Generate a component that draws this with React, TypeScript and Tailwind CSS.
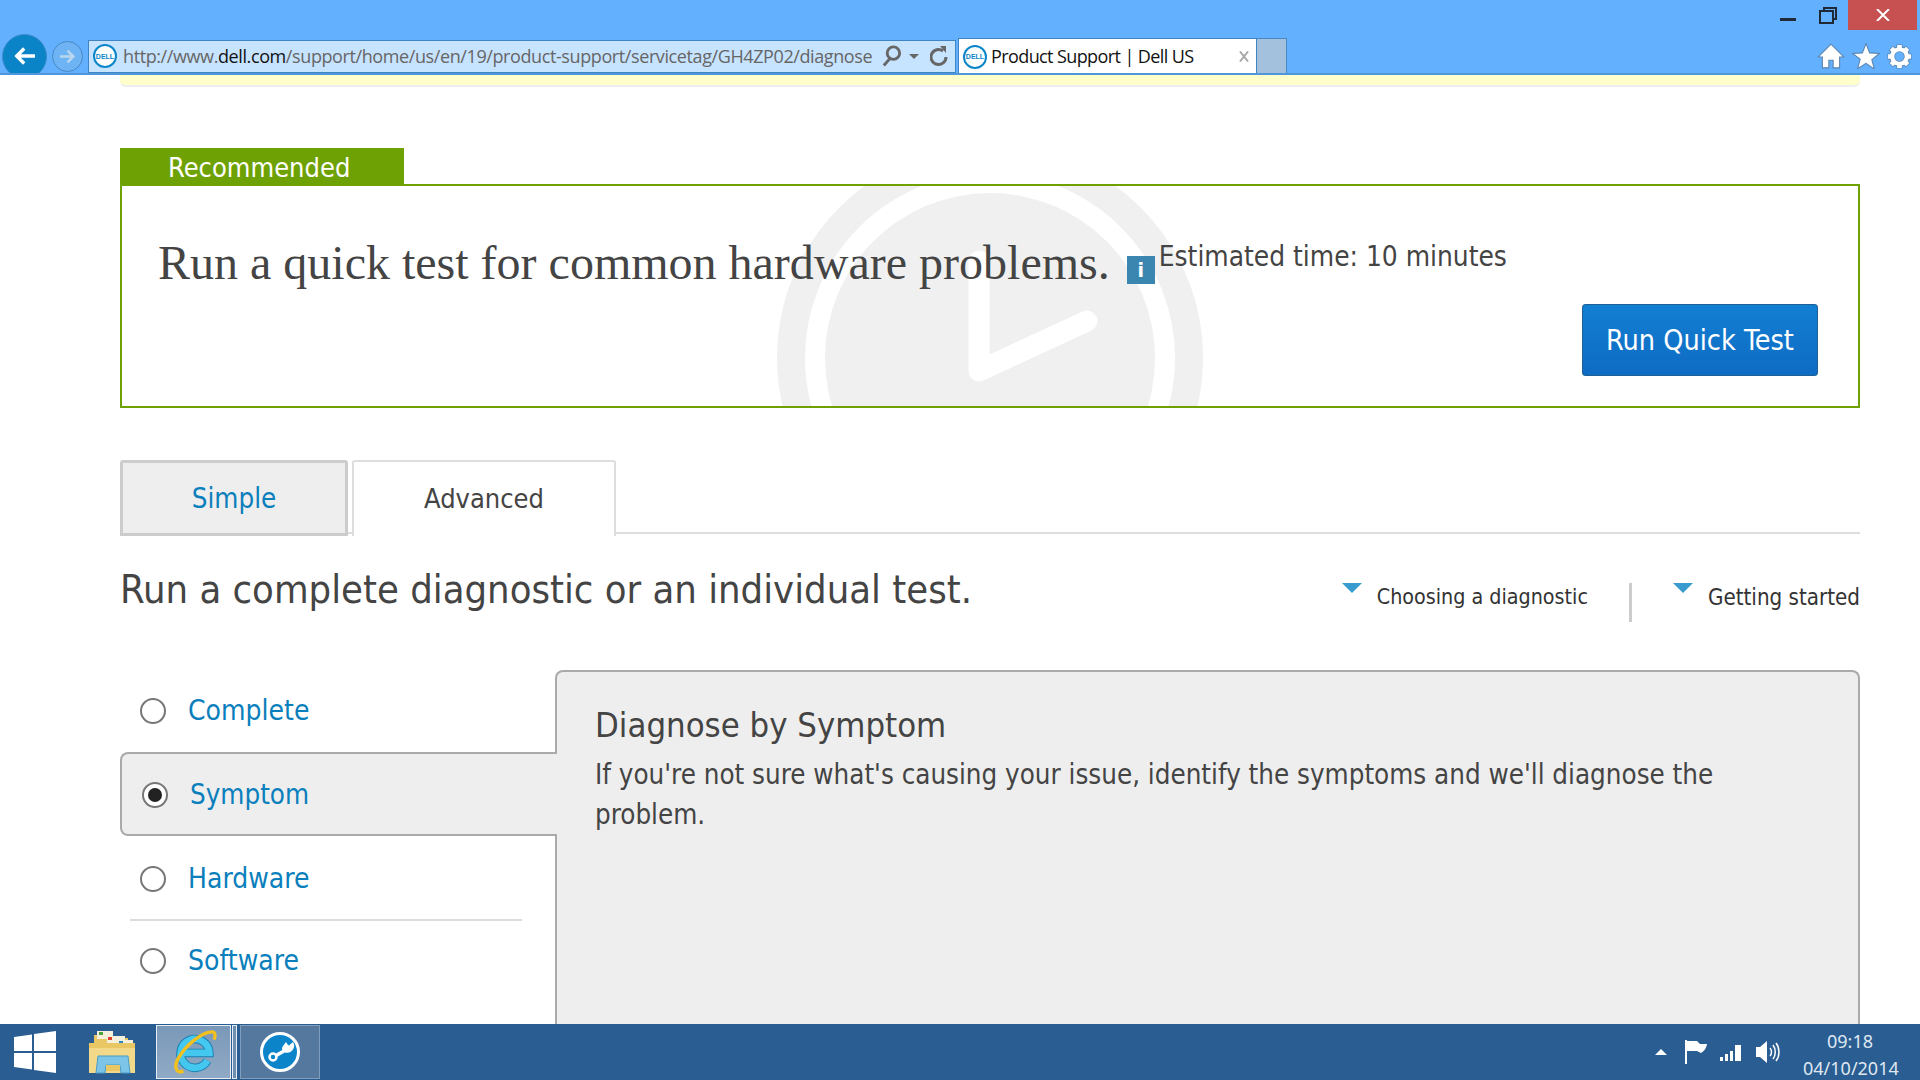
const bodyFont = "font-['DejaVu_Sans_Condensed','DejaVu_Sans',sans-serif]";

function DellLogo() {
  return (
    <div className="flex h-6 w-6 shrink-0 items-center justify-center rounded-full border-2 border-[#0a86c9] bg-white">
      <span className="font-['Liberation_Sans',sans-serif] text-[7px] leading-none font-bold text-[#0a86c9]">DELL</span>
    </div>
  );
}

function BrowserChrome() {
  return (
    <header className="h-[75px] shrink-0 overflow-hidden border-b-2 border-[#4e97dc] bg-[#62b0fe]">
      {/* Window controls */}
      <div className="flex h-[38px] justify-end">
        <div className="mt-[18px] mr-[23px] h-[3px] w-[16px] bg-[#1f2a36]" />
        <svg viewBox="0 0 18 17" className="mt-[7px] mr-[11px] h-[17px] w-[18px]" fill="none" stroke="#1f2a36" strokeWidth="2">
          <path d="M5 3V1h12v11h-3" />
          <rect x="1" y="4" width="13" height="12" />
        </svg>
        <div className="mr-[3px] flex h-[30px] w-[69px] items-center justify-center bg-[#c75050]">
          <svg viewBox="0 0 14 12" className="h-[12px] w-[14px]" stroke="#fff" strokeWidth="2">
            <path d="M1 0l12 12M13 0L1 12" />
          </svg>
        </div>
      </div>

      {/* Navigation row */}
      <div className="flex h-[36px] items-center">
        <div className="ml-[2px] flex h-[45px] w-[45px] shrink-0 items-center justify-center rounded-full border border-[#3c8ccb] bg-[#0a84c6]">
          <svg viewBox="0 0 26 24" className="h-[20px] w-[24px]" fill="none" stroke="#fff" strokeWidth="4">
            <path d="M12 3L3 12l9 9M3 12h22" />
          </svg>
        </div>
        <div className="ml-[5px] flex h-[31px] w-[31px] shrink-0 items-center justify-center rounded-full border border-[#4a88c4] bg-[#6eb4f5]">
          <svg viewBox="0 0 20 18" className="h-[15px] w-[17px]" fill="none" stroke="#b9d6ef" strokeWidth="3">
            <path d="M10 2l7 7-7 7M17 9H1" />
          </svg>
        </div>
        <div className="ml-[5px] flex h-[33px] w-[868px] shrink-0 items-center border border-[#3f85c4] bg-[#c6e3ff] pl-[4px]">
          <DellLogo />
          <span className="ml-[6px] w-[750px] shrink-0 font-['Open_Sans',sans-serif] text-[18px] tracking-[-0.4px] whitespace-nowrap text-[#666]">
            http://www.<span className="text-[#111]">dell.com</span>/support/home/us/en/19/product-support/servicetag/GH4ZP02/diagnose
          </span>
          <svg viewBox="0 0 22 24" className="ml-[8px] h-[24px] w-[21px]" fill="none" stroke="#666" strokeWidth="3">
            <circle cx="13" cy="9" r="6.5" />
            <path d="M9 15l-6 7" />
          </svg>
          <div className="ml-[7px] h-0 w-0 border-x-[5px] border-t-[5px] border-x-transparent border-t-[#666]" />
          <svg viewBox="0 0 18 22" className="ml-[11px] h-[22px] w-[18px]" fill="none" stroke="#666" strokeWidth="3">
            <path d="M13 6a7.5 7.5 0 1 0 3 6" />
            <path d="M10 1l6 0 0 7z" fill="#666" stroke="none" />
          </svg>
        </div>
        <div className="ml-[2px] flex h-[36px] w-[299px] shrink-0 items-center border border-b-0 border-[#3f85c4] bg-white pl-[4px]">
          <DellLogo />
          <span className="ml-[4px] font-['Open_Sans',sans-serif] text-[18px] tracking-[-0.6px] whitespace-nowrap text-[#111]">Product Support | Dell US</span>
          <svg viewBox="0 0 10 10" className="mr-[7px] ml-auto h-[11px] w-[10px]" stroke="#aaa" strokeWidth="2">
            <path d="M1 0l8 10M9 0L1 10" />
          </svg>
        </div>
        <div className="h-[36px] w-[30px] shrink-0 border border-l-0 border-[#4a88c4] bg-[#a3c1dd]" />
        <div className="ml-auto flex items-center gap-[7px] pr-[8px]">
          <svg viewBox="0 0 26 24" className="h-[26px] w-[28px]" fill="#fff" stroke="#5b84ad" strokeWidth="1">
            <path d="M13 1L1 13h4v10h6v-7h4v7h6V13h4z" />
          </svg>
          <svg viewBox="0 0 26 24" className="h-[26px] w-[28px]" fill="#fff" stroke="#5b84ad" strokeWidth="1">
            <path d="M13 0.5l3.4 8.6 9.1.5-7.1 5.8 2.4 8.8L13 18.8l-7.8 4.9 2.4-8.8L.5 9.6l9.1-.5z" />
          </svg>
          <svg viewBox="0 0 24 24" className="h-[25px] w-[25px]" fill="none">
            <path d="M12 .5v5M12 18.500v5M.5 12h5M18.500 12h5M3.800 3.800l3.600 3.600M16.600 16.600l3.600 3.600M20.200 3.800l-3.600 3.600M7.400 16.600l-3.600 3.600" stroke="#5b84ad" strokeWidth="6" />
            <circle cx="12" cy="12" r="7" stroke="#5b84ad" strokeWidth="5.500" />
            <path d="M12 1v4M12 19v4M1 12h4M19 12h4M4.200 4.200l3 3M16.800 16.800l3 3M19.800 4.200l-3 3M7.200 16.800l-3 3" stroke="#fff" strokeWidth="4.500" />
            <circle cx="12" cy="12" r="7" stroke="#fff" strokeWidth="4" />
          </svg>
        </div>
      </div>
    </header>
  );
}

function QuickTestCard() {
  return (
    <section className="mt-[61px]">
      <div className="flex h-[36px] w-[284px] items-center bg-[#6ea204] pt-[4px] pl-[48px] text-[27px] text-white">Recommended</div>
      <div className="relative h-[224px] overflow-hidden border-2 border-[#6ea204] bg-white">
        <svg viewBox="0 0 1736 220" className="absolute inset-0 h-[220px] w-[1736px]" fill="none">
          <circle cx="868" cy="172" r="199" stroke="#f0f0f0" strokeWidth="28" />
          <circle cx="868" cy="172" r="165" fill="#f0f0f0" />
          <path d="M857 75v110l108-50" stroke="#fff" strokeWidth="21" strokeLinecap="round" strokeLinejoin="round" />
        </svg>
        <div className="relative flex items-start pt-[49px] pl-[36px]">
          <h2 className="font-['Liberation_Serif',serif] text-[48px] leading-[56px] text-[#444]">Run a quick test for common hardware problems.</h2>
          <div className="mt-[21px] ml-[17px] flex h-[28px] w-[28px] items-center justify-center bg-[#3b86b0] font-['DejaVu_Sans',sans-serif] text-[19px] leading-none font-bold text-white">i</div>
          <span className="mt-[5px] ml-[4px] text-[27.8px] leading-[34px] text-[#444]">Estimated time: 10 minutes</span>
        </div>
        <div className="relative mt-[13px] flex justify-end pr-[40px]">
          <button className="h-[72px] w-[236px] rounded-[3px] border border-[#1f6096] bg-gradient-to-b from-[#127fd2] to-[#0f6bc4] pt-[2px] text-[28.5px] text-white">Run Quick Test</button>
        </div>
      </div>
    </section>
  );
}

function Tabs() {
  return (
    <nav className="mt-[52px] flex h-[74px] gap-[4px] border-b-2 border-[#dddddd]">
      <div className="flex h-[76px] w-[228px] items-center justify-center rounded-t-[3px] border-[3px] border-[#cccccc] bg-[#eeeeee] pt-[1px] text-[27.5px] text-[#0a7fbc]">Simple</div>
      <div className="flex h-[76px] w-[264px] items-center justify-center rounded-t-[3px] border-2 border-b-0 border-[#dddddd] bg-white text-[27px] text-[#444]">Advanced</div>
    </nav>
  );
}

function HelpLink({ label, className }: { label: string; className: string }) {
  return (
    <div className="flex items-start gap-[15px]">
      <div className="h-0 w-0 border-x-[10px] border-t-[10px] border-x-transparent border-t-[#3a9bd0]" />
      <span className={`mt-px leading-[26px] whitespace-nowrap text-[#333] ${className}`}>{label}</span>
    </div>
  );
}

function Radio({ checked }: { checked?: boolean }) {
  return (
    <div className="flex h-[26px] w-[26px] shrink-0 items-center justify-center rounded-full border-2 border-[#777] bg-white">
      {checked && <div className="h-[14px] w-[14px] rounded-full bg-[#222]" />}
    </div>
  );
}

function Option({ label, className }: { label: string; className?: string }) {
  return (
    <div className={`flex items-center gap-[22px] pl-[20px] text-[28px] text-[#0a7fbc] ${className ?? ''}`}>
      <Radio />
      {label}
    </div>
  );
}

function DiagnosticPicker() {
  return (
    <div className="mt-[48px] flex min-h-0 flex-1">
      <div className="w-[435px] shrink-0">
        <Option label="Complete" className="h-[82px]" />
        <div className="relative z-10 -mr-[2px] flex h-[84px] items-center gap-[22px] rounded-l-[8px] border-2 border-r-0 border-[#aaaaaa] bg-[#eeeeee] pt-[1px] pl-[20px] text-[27.5px] text-[#0a7fbc]">
          <Radio checked />
          Symptom
        </div>
        <Option label="Hardware" className="h-[83px] pt-[2px]" />
        <div className="mr-[33px] ml-[10px] h-[2px] bg-[#dddddd]" />
        <Option label="Software" className="h-[80px]" />
      </div>
      <div className="flex-1 rounded-t-[8px] border-2 border-b-0 border-[#aaaaaa] bg-[#eeeeee] pt-[31px] pl-[38px]">
        <h3 className="text-[34.4px] leading-[44px] text-[#444]">Diagnose by Symptom</h3>
        <p className="mt-[7px] max-w-[1160px] text-[27.5px] leading-[40px] text-[#444]">If you're not sure what's causing your issue, identify the symptoms and we'll diagnose the problem.</p>
      </div>
    </div>
  );
}

function Taskbar() {
  return (
    <footer className="flex h-14 shrink-0 items-center bg-[#2a5d91]">
      <svg viewBox="0 0 42 42" className="ml-[14px] h-[42px] w-[42px]" fill="#fff">
        <path d="M0 6l18-2.600V20H0zM20 3.100L42 0v20H20zM0 22h18v16.600L0 36zM20 22h22v20l-22-3.100z" />
      </svg>

      {/* Explorer */}
      <svg viewBox="0 0 46 46" className="ml-[33px] h-[46px] w-[46px]">
        <path d="M5 6h14l2 3h18v8H5z" fill="#e8c766" />
        <rect x="8" y="2" width="16" height="8" fill="#f5f0dc" />
        <rect x="10" y="3" width="4" height="3" fill="#4aa33a" />
        <rect x="18" y="7" width="18" height="7" fill="#f5f0dc" />
        <rect x="19" y="8" width="4" height="3" fill="#d8402c" />
        <rect x="28" y="11" width="16" height="7" fill="#f5f0dc" />
        <rect x="30" y="12" width="4" height="3" fill="#2b86c9" />
        <path d="M0 14h46v30H0z" fill="#f2d98a" />
        <path d="M0 14h46v5H0z" fill="#e9c765" />
        <path d="M7 44l2-17h30l2 17h-9l-1-8H17l-1 8z" fill="#7cc4e8" stroke="#4b9dc6" />
        <rect x="17" y="36" width="14" height="6" fill="#e9c765" />
      </svg>

      {/* Internet Explorer, active */}
      <div className="ml-[21px] flex h-[54px] w-[75px] items-center justify-center border border-[#e6edf4] bg-gradient-to-b from-[#7a98b8] to-[#90aac5]">
        <svg viewBox="0 0 48 48" className="h-[46px] w-[48px]" fill="none">
          <path d="M38 33A15 15 0 1 1 40 25H12" stroke="#1b7fb0" strokeWidth="9" />
          <path d="M38 33A15 15 0 1 1 40 25H12" stroke="#45c8f0" strokeWidth="7" />
          <path d="M13 44C4 47 3 38 8 30C16 16 32 4 42 3C46 2.500 47 6 45 11" stroke="#f2c11f" strokeWidth="3.500" />
        </svg>
      </div>
      <div className="ml-px h-[54px] w-[5px] border border-[#e6edf4] bg-[#6f8fb0]" />

      {/* Diagnostics tool */}
      <div className="ml-[3px] flex h-[54px] w-[80px] items-center justify-center border border-[#7f9dbc] bg-[#55789f]">
        <div className="flex h-[40px] w-[40px] items-center justify-center rounded-full border-[3px] border-white bg-[#0c84ca]">
          <svg viewBox="0 0 30 30" className="h-[30px] w-[30px]" fill="none" stroke="#fff">
            <circle cx="8" cy="20" r="3.500" strokeWidth="2.500" />
            <path d="M11 18.500l8-4.500" strokeWidth="3.500" />
            <path d="M24 8.500l4-3.500a7 7 0 0 1-9 10a4 4 0 0 1-1-6l3-4l2 3z" fill="#fff" stroke="none" />
          </svg>
        </div>
      </div>

      {/* Tray */}
      <div className="ml-auto flex items-center">
        <div className="h-0 w-0 border-x-[6px] border-b-[6px] border-x-transparent border-b-white" />
        <svg viewBox="0 0 24 24" className="ml-[17px] h-[24px] w-[24px]">
          <path d="M2 0v24" stroke="#fff" strokeWidth="2" />
          <path d="M3 1h10l3 3h7c-1 5-3 7-6 9l-4-2H3z" fill="#fff" />
        </svg>
        <svg viewBox="0 0 21 18" className="ml-[12px] h-[18px] w-[21px]" fill="#fff">
          <path d="M0 14h3v4H0zM5 11h3v7H5zM10 8h3v10h-3zM15 2h6v16h-6z" />
        </svg>
        <svg viewBox="0 0 25 24" className="ml-[14px] h-[24px] w-[25px]" fill="none">
          <path d="M1 7h4l7-6v22l-7-6H1z" fill="#fff" />
          <path d="M15 8c2 2 2 6 0 8M18 5c3 4 3 10 0 14M21 3c4 5 4 13 0 18" stroke="#fff" strokeWidth="1.500" />
        </svg>
        <div className="mr-[23px] ml-[23px] w-[94px] pt-[6px] text-center font-['Noto_Sans',sans-serif] text-[18px] leading-[27px] whitespace-nowrap text-[#dfe8f1]">
          <div>09:18</div>
          <div>04/10/2014</div>
        </div>
      </div>
    </footer>
  );
}

export default function App() {
  return (
    <div className={`flex h-screen w-[1920px] flex-col overflow-hidden bg-white ${bodyFont}`}>
      <BrowserChrome />
      <main className="flex min-h-0 flex-1 flex-col pr-[60px] pl-[120px]">
        <div className="h-[12px] shrink-0 rounded-b-[6px] border-b-2 border-[#eeeeee] bg-[#ffffcc]" />
        <QuickTestCard />
        <Tabs />
        <div className="mt-[31px] flex items-start justify-between">
          <h1 className="text-[39.6px] leading-[48px] text-[#444]">Run a complete diagnostic or an individual test.</h1>
          <div className="mt-[18px] flex items-start">
            <HelpLink label="Choosing a diagnostic" className="text-[21.3px]" />
            <div className="mx-[41px] h-[39px] w-[3px] bg-[#cccccc]" />
            <HelpLink label="Getting started" className="text-[22.2px]" />
          </div>
        </div>
        <DiagnosticPicker />
      </main>
      <Taskbar />
    </div>
  );
}
